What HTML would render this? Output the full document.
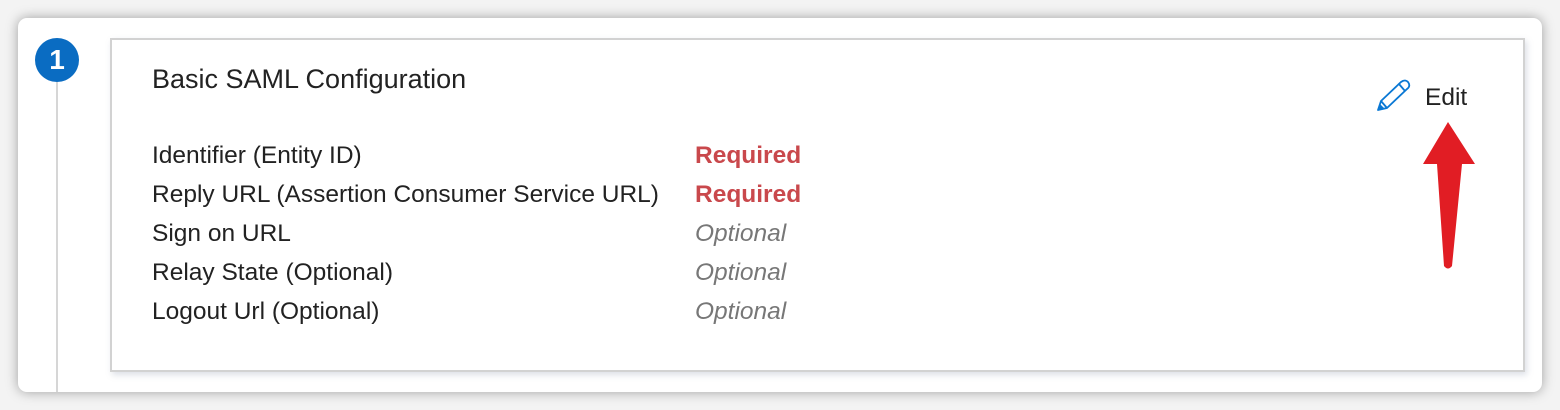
<!DOCTYPE html>
<html><head><style>
body{margin:0;width:1560px;height:410px;background:#f3f3f3;position:relative;overflow:hidden;font-family:"Segoe UI","Liberation Sans",sans-serif;}
.card{position:absolute;left:18px;top:18px;width:1524px;height:374px;background:#fff;border-radius:9px;box-shadow:0 0 12px rgba(0,0,0,.35);}
.circ{position:absolute;left:35px;top:38px;width:44px;height:44px;border-radius:50%;background:#0a6cc2;color:#fff;font:bold 28px "Liberation Sans",sans-serif;text-align:center;line-height:44px;}
.line{position:absolute;left:56px;top:82px;width:2px;height:310px;background:#d6d6d6;}
.box{position:absolute;left:110px;top:38px;width:1411px;height:330px;border:2px solid #d2d2d2;background:#fff;box-shadow:2px 3px 6px rgba(120,130,160,.25);}
.t{position:absolute;font-size:24.5px;color:#222;white-space:nowrap;}
.req{color:#c9484c;font-weight:bold;}
.opt{color:#777;font-style:italic;}
</style></head><body>
<div class="card"></div>
<div class="line"></div>
<div class="circ">1</div>
<div class="box"></div>
<div class="t" style="left:152px;top:64px;font-size:27px">Basic SAML Configuration</div>
<div class="t" style="left:152px;top:142px">Identifier (Entity ID)</div>
<div class="t" style="left:152px;top:181px">Reply URL (Assertion Consumer Service URL)</div>
<div class="t" style="left:152px;top:220px">Sign on URL</div>
<div class="t" style="left:152px;top:259px">Relay State (Optional)</div>
<div class="t" style="left:152px;top:298px">Logout Url (Optional)</div>
<div class="t req" style="left:695px;top:142px">Required</div>
<div class="t req" style="left:695px;top:181px">Required</div>
<div class="t opt" style="left:695px;top:220px">Optional</div>
<div class="t opt" style="left:695px;top:259px">Optional</div>
<div class="t opt" style="left:695px;top:298px">Optional</div>
<div class="t" style="left:1425px;top:84px">Edit</div>
<svg style="position:absolute;left:1374px;top:78px" width="38" height="36" viewBox="0 0 38 36">
<path d="M4 32 L7 23 L27 4 Q31 1 34 4 Q37 8 33 11 L13 30 Z M7 23 L13 30 M25 6 L31 13" fill="none" stroke="#0a78d4" stroke-width="1.8" stroke-linejoin="round"/>
<path d="M4 32 L6 26 L10 30 Z" fill="#0a78d4"/>
</svg>
<svg style="position:absolute;left:1420px;top:120px" width="60" height="152" viewBox="0 0 60 152">
<path d="M28 2 L3 44 L17 44 L24 146 Q28 151 32 146 L42 44 L55 44 Z" fill="#e11d24"/>
</svg>
</body></html>
